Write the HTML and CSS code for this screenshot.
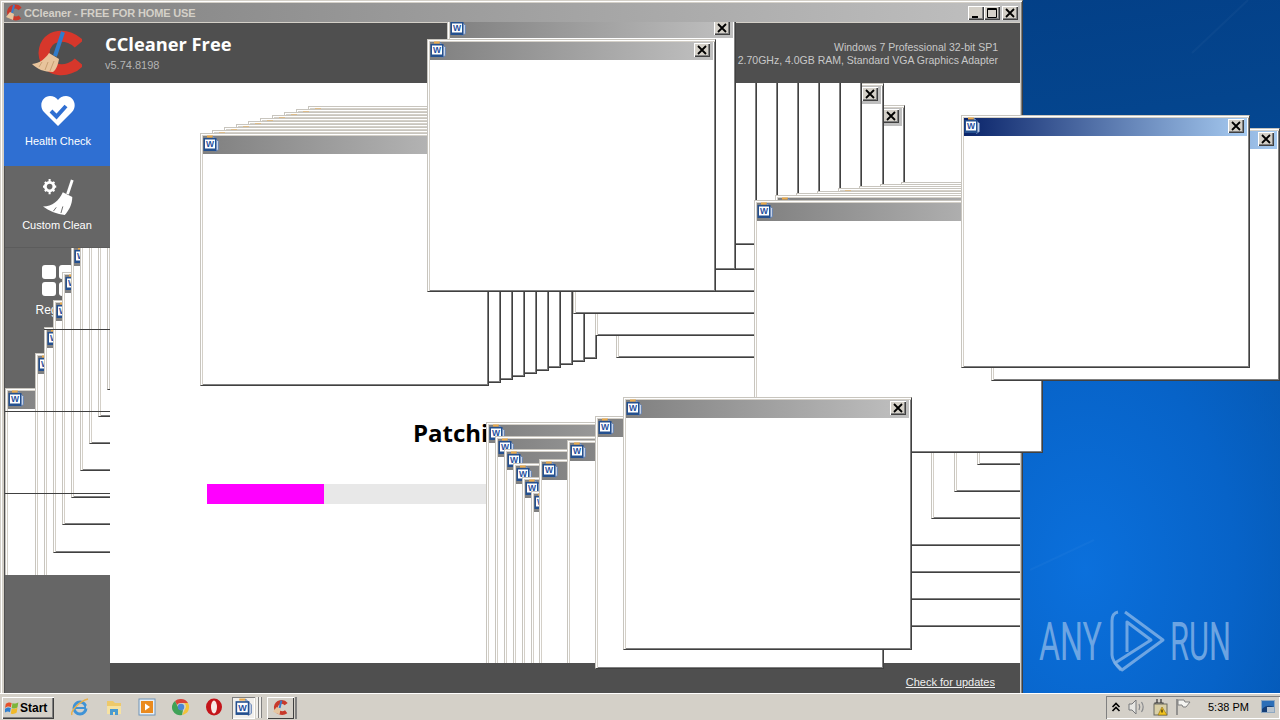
FILE: index.html
```html
<!DOCTYPE html>
<html lang="en">
<head>
<meta charset="utf-8">
<title>CCleaner - FREE FOR HOME USE</title>
<link rel="stylesheet" href="styles.css">
</head>
<body>
<svg class="defs" aria-hidden="true">
  <symbol id="word" viewBox="0 0 16 17">
    <path d="M4 1.500h6" stroke="#e9a94a" stroke-width="2" fill="none"/>
    <path d="M10 1l5.500 5.500v8l-3 2z" fill="#c9d3e6" stroke="#5d7db0" stroke-width=".8"/>
    <rect x=".5" y="3" width="13" height="13" fill="#24508f"/>
    <rect x="2" y="4.500" width="10" height="9" fill="#fff"/>
    <text class="word-w" x="7" y="12.200">W</text>
  </symbol>
  <symbol id="x" viewBox="0 0 16 14">
    <path d="M4 3l8 8M12 3l-8 8" stroke="#000" stroke-width="1.800" fill="none"/>
  </symbol>
</svg>

<div class="desktop">
  <svg class="streaks" viewBox="0 0 258 692" aria-hidden="true">
    <path d="M226 0L170 53M8 570L72 540" stroke="#fff" stroke-opacity=".03" stroke-width="2" fill="none"/>
  </svg>
  <svg class="watermark" viewBox="0 0 195 66">
    <text class="mark-text" x="0" y="52" textLength="63" lengthAdjust="spacingAndGlyphs">ANY</text>
    <path d="M86 4L124 32L83 62L76 55L112 32L88 14V44" fill="none" stroke="#7fb0e6" stroke-opacity=".85" stroke-width="3" stroke-linejoin="round"/>
    <path d="M79 4C74 5 73 9 73 13V47C73 52 76 56 82 62" fill="none" stroke="#7fb0e6" stroke-opacity=".85" stroke-width="3"/>
    <text class="mark-text" x="131" y="52" textLength="61" lengthAdjust="spacingAndGlyphs">RUN</text>
  </svg>

  <div class="ccleaner">
    <div class="titlebar">
      <svg class="app-ico" viewBox="0 0 18 18"><path d="M15 5C12 1 5 2 4 8c0 6 7 8 11 5" fill="none" stroke="#c8392b" stroke-width="4"/><path d="M9 1L7 9" stroke="#3a7cc8" stroke-width="2"/><path d="M5 8l4 2-1 6-7-3z" fill="#e6c6a0"/></svg>
      <span class="app-title">CCleaner - FREE FOR HOME USE</span>
      <span class="capbtns">
        <span class="capbtn"><svg viewBox="0 0 16 14"><path d="M4 11h6" stroke="#000" stroke-width="2"/></svg></span>
        <span class="capbtn"><svg viewBox="0 0 16 14"><path d="M3.500 2.500h9v9h-9zM3 3.500h10" fill="none" stroke="#000"/></svg></span>
        <span class="capbtn capbtn-close"><svg><use href="#x"/></svg></span>
      </span>
    </div>
    <header class="header">
      <svg class="logo" viewBox="0 0 52 48">
        <path d="M49 15C40 4 15 3 14 24C15 45 40 44 49 33" fill="none" stroke="#d7372b" stroke-width="11"/>
        <path d="M33 3L25 27" stroke="#2f7ccb" stroke-width="4"/>
        <path d="M19 24L29 30C28 36 26 41 23 43C14 43 7 40 2 35C10 34 15 30 19 24Z" fill="#e8c49c"/>
        <path d="M12 33L9 38M18 33L15 41M24 32L20 42" stroke="#c79e72" fill="none"/>
      </svg>
      <div class="brand">
        <div class="brand-name">CCleaner Free</div>
        <div class="brand-ver">v5.74.8198</div>
      </div>
      <div class="sysinfo">
        <div>Windows 7 Professional 32-bit SP1</div>
        <div>2.70GHz, 4.0GB RAM, Standard VGA Graphics Adapter</div>
      </div>
    </header>
    <div class="body">
      <nav class="sidebar">
        <div class="tile tile-health">
          <svg class="tile-ico ico-heart" viewBox="0 0 34 30"><path d="M17 30L3 16C-3 9 2 0 9 0c3.500 0 6 1.500 8 4c2-2.500 4.500-4 8-4c7 0 12 9 6 16z" fill="#fff"/><path d="M10 15l5.500 5.500L25 10" fill="none" stroke="#2f6fd2" stroke-width="4"/></svg>
          <span>Health Check</span>
        </div>
        <div class="tile tile-custom">
          <svg class="tile-ico ico-broom" viewBox="0 0 36 38">
            <circle cx="7" cy="8" r="4.500" fill="none" stroke="#fff" stroke-width="3"/>
            <path d="M7 0v3M7 13v3M0 8h3M11 8h3M2 3l2 2M10 11l2 2M12 3l-2 2M4 11l-2 2" stroke="#fff" stroke-width="2.200"/>
            <path d="M31 1L26 16" stroke="#fff" stroke-width="3"/>
            <path d="M21 14L31 19C31 27 27 34 23 38C15 37 7 34 0 29C10 29 17 23 21 14Z" fill="#fff"/>
            <path d="M14 30L11 34M21 29L19 36" stroke="#666" fill="none"/>
          </svg>
          <span>Custom Clean</span>
        </div>
        <div class="tile tile-registry">
          <div class="tile-ico squares"><i></i><i></i><i></i><i></i></div>
          <span>Registry</span>
        </div>
        <div class="tile tile-tools"></div>
        <div class="side-stack">
          <div class="side-plane">
            <div class="win ts1"><div class="wt"><svg class="wi"><use href="#word"/></svg><span class="wx"><svg><use href="#x"/></svg></span></div></div>
            <div class="win ts2"><div class="wt"><svg class="wi"><use href="#word"/></svg><span class="wx"><svg><use href="#x"/></svg></span></div></div>
            <div class="win ts3"><div class="wt"><svg class="wi"><use href="#word"/></svg><span class="wx"><svg><use href="#x"/></svg></span></div></div>
            <div class="win ts4"><div class="wt"><svg class="wi"><use href="#word"/></svg><span class="wx"><svg><use href="#x"/></svg></span></div></div>
            <div class="win ts5"><div class="wt"><svg class="wi"><use href="#word"/></svg><span class="wx"><svg><use href="#x"/></svg></span></div></div>
            <div class="win ts6"><div class="wt"><svg class="wi"><use href="#word"/></svg><span class="wx"><svg><use href="#x"/></svg></span></div></div>
            <div class="win ts7"><div class="wt"><svg class="wi"><use href="#word"/></svg><span class="wx"><svg><use href="#x"/></svg></span></div></div>
            <div class="win ts8"><div class="wt"><svg class="wi"><use href="#word"/></svg><span class="wx"><svg><use href="#x"/></svg></span></div></div>
            <div class="win ts9"><div class="wt"><svg class="wi"><use href="#word"/></svg><span class="wx"><svg><use href="#x"/></svg></span></div></div>
            <div class="win ts10"><div class="wt"><svg class="wi"><use href="#word"/></svg><span class="wx"><svg><use href="#x"/></svg></span></div></div>
          </div>
          <div class="sep sep1"></div>
          <div class="sep sep2"></div>
          <div class="sep sep3"></div>
        </div>
      </nav>
      <div class="right">
        <main class="main">
          <h1 class="status">Patching</h1>
          <div class="track"><div class="fill"></div></div>
          <div class="plane">
            <div class="win a1"><div class="wt"><svg class="wi"><use href="#word"/></svg><span class="wx"><svg><use href="#x"/></svg></span></div></div>
            <div class="win a2"><div class="wt"><svg class="wi"><use href="#word"/></svg><span class="wx"><svg><use href="#x"/></svg></span></div></div>
            <div class="win a3"><div class="wt"><svg class="wi"><use href="#word"/></svg><span class="wx"><svg><use href="#x"/></svg></span></div></div>
            <div class="win a4"><div class="wt"><svg class="wi"><use href="#word"/></svg><span class="wx"><svg><use href="#x"/></svg></span></div></div>
            <div class="win a5"><div class="wt"><svg class="wi"><use href="#word"/></svg><span class="wx"><svg><use href="#x"/></svg></span></div></div>
            <div class="win a6"><div class="wt"><svg class="wi"><use href="#word"/></svg><span class="wx"><svg><use href="#x"/></svg></span></div></div>
            <div class="win a7"><div class="wt"><svg class="wi"><use href="#word"/></svg><span class="wx"><svg><use href="#x"/></svg></span></div></div>
            <div class="win a8"><div class="wt"><svg class="wi"><use href="#word"/></svg><span class="wx"><svg><use href="#x"/></svg></span></div></div>
            <div class="win a9"><div class="wt"><svg class="wi"><use href="#word"/></svg><span class="wx"><svg><use href="#x"/></svg></span></div></div>
            <div class="win a10"><div class="wt"><svg class="wi"><use href="#word"/></svg><span class="wx"><svg><use href="#x"/></svg></span></div></div>

            <div class="win d1"><div class="wt"><svg class="wi"><use href="#word"/></svg><span class="wx"><svg><use href="#x"/></svg></span></div></div>
            <div class="win d2"><div class="wt"><svg class="wi"><use href="#word"/></svg><span class="wx"><svg><use href="#x"/></svg></span></div></div>
            <div class="win d3"><div class="wt"><svg class="wi"><use href="#word"/></svg><span class="wx"><svg><use href="#x"/></svg></span></div></div>
            <div class="win d4"><div class="wt"><svg class="wi"><use href="#word"/></svg><span class="wx"><svg><use href="#x"/></svg></span></div></div>
            <div class="win d5"><div class="wt"><svg class="wi"><use href="#word"/></svg><span class="wx"><svg><use href="#x"/></svg></span></div></div>
            <div class="win d6"><div class="wt"><svg class="wi"><use href="#word"/></svg><span class="wx"><svg><use href="#x"/></svg></span></div></div>
            <div class="win d7"><div class="wt"><svg class="wi"><use href="#word"/></svg><span class="wx"><svg><use href="#x"/></svg></span></div></div>
            <div class="win d8"><div class="wt"><svg class="wi"><use href="#word"/></svg><span class="wx"><svg><use href="#x"/></svg></span></div></div>

            <div class="win b1"><div class="wt"><svg class="wi"><use href="#word"/></svg><span class="wx"><svg><use href="#x"/></svg></span></div></div>
            <div class="win b2"><div class="wt"><svg class="wi"><use href="#word"/></svg><span class="wx"><svg><use href="#x"/></svg></span></div></div>
            <div class="win b3"><div class="wt"><svg class="wi"><use href="#word"/></svg><span class="wx"><svg><use href="#x"/></svg></span></div></div>
            <div class="win b4"><div class="wt"><svg class="wi"><use href="#word"/></svg><span class="wx"><svg><use href="#x"/></svg></span></div></div>
            <div class="win b5"><div class="wt"><svg class="wi"><use href="#word"/></svg><span class="wx"><svg><use href="#x"/></svg></span></div></div>
            <div class="win b6"><div class="wt"><svg class="wi"><use href="#word"/></svg><span class="wx"><svg><use href="#x"/></svg></span></div></div>
            <div class="win b7"><div class="wt"><svg class="wi"><use href="#word"/></svg><span class="wx"><svg><use href="#x"/></svg></span></div></div>

            <div class="win c1"><div class="wt"><svg class="wi"><use href="#word"/></svg><span class="wx"><svg><use href="#x"/></svg></span></div></div>
            <div class="win c2"><div class="wt"><svg class="wi"><use href="#word"/></svg><span class="wx"><svg><use href="#x"/></svg></span></div></div>
            <div class="win c3"><div class="wt"><svg class="wi"><use href="#word"/></svg><span class="wx"><svg><use href="#x"/></svg></span></div></div>
            <div class="win c4"><div class="wt"><svg class="wi"><use href="#word"/></svg><span class="wx"><svg><use href="#x"/></svg></span></div></div>
            <div class="win c5"><div class="wt"><svg class="wi"><use href="#word"/></svg><span class="wx"><svg><use href="#x"/></svg></span></div></div>
            <div class="win c6"><div class="wt"><svg class="wi"><use href="#word"/></svg><span class="wx"><svg><use href="#x"/></svg></span></div></div>
            <div class="win c7"><div class="wt"><svg class="wi"><use href="#word"/></svg><span class="wx"><svg><use href="#x"/></svg></span></div></div>

            <div class="win e1"><div class="wt"><svg class="wi"><use href="#word"/></svg><span class="wx"><svg><use href="#x"/></svg></span></div></div>
            <div class="win e2"><div class="wt"><svg class="wi"><use href="#word"/></svg><span class="wx"><svg><use href="#x"/></svg></span></div></div>
            <div class="win e3"><div class="wt"><svg class="wi"><use href="#word"/></svg><span class="wx"><svg><use href="#x"/></svg></span></div></div>
            <div class="win e4"><div class="wt"><svg class="wi"><use href="#word"/></svg><span class="wx"><svg><use href="#x"/></svg></span></div></div>
            <div class="win e5"><div class="wt"><svg class="wi"><use href="#word"/></svg><span class="wx"><svg><use href="#x"/></svg></span></div></div>
            <div class="win e6"><div class="wt"><svg class="wi"><use href="#word"/></svg><span class="wx"><svg><use href="#x"/></svg></span></div></div>
            <div class="win f1"><div class="wt"><svg class="wi"><use href="#word"/></svg><span class="wx"><svg><use href="#x"/></svg></span></div></div>
            <div class="win f2"><div class="wt"><svg class="wi"><use href="#word"/></svg><span class="wx"><svg><use href="#x"/></svg></span></div></div>
          </div>
        </main>
        <footer class="footer"><a class="update-link">Check for updates</a></footer>
      </div>
    </div>
  </div>

  <div class="win tw0"><div class="wt"><svg class="wi"><use href="#word"/></svg><span class="wx"><svg><use href="#x"/></svg></span></div></div>
  <div class="win top tw1"><div class="wt"><svg class="wi"><use href="#word"/></svg><span class="wx"><svg><use href="#x"/></svg></span></div></div>
  <div class="win top tw2"><div class="wt"><svg class="wi"><use href="#word"/></svg><span class="wx"><svg><use href="#x"/></svg></span></div></div>
  <div class="win top tw3"><div class="wt"><svg class="wi"><use href="#word"/></svg><span class="wx"><svg><use href="#x"/></svg></span></div></div>
  <div class="win top tw4"><div class="wt"><svg class="wi"><use href="#word"/></svg><span class="wx"><svg><use href="#x"/></svg></span></div></div>
  <div class="win top tw5"><div class="wt wt-active"><svg class="wi"><use href="#word"/></svg><span class="wx"><svg><use href="#x"/></svg></span></div></div>
  <div class="win top tw6"><div class="wt wt-active"><svg class="wi"><use href="#word"/></svg><span class="wx"><svg><use href="#x"/></svg></span></div></div>

  <div class="taskbar">
    <button class="start">
      <svg class="flag" viewBox="0 0 18 16"><path d="M1 3c3-2 5-2 7-1L7 7C5 6 3 6 0 8z" fill="#e5502a"/><path d="M9 2c2 1 4 1 7-1l-1 6c-3 2-5 2-7 1z" fill="#7cb53a"/><path d="M0 9c3-2 5-2 7-1l-1 5c-2-1-4-1-7 1z" fill="#2f7fd0"/><path d="M8 8.500c2 1 4 1 7-1l-1 6c-3 2-5 2-7 1z" fill="#f1b92a"/></svg>
      <span>Start</span>
    </button>
    <div class="quick">
      <svg class="ql" viewBox="0 0 18 18"><circle cx="9" cy="10" r="6" fill="none" stroke="#3f93d6" stroke-width="3"/><path d="M4 10h10" stroke="#3f93d6" stroke-width="2"/><path d="M15 9h3" stroke="#d4d0c8" stroke-width="3"/><path d="M1 17C-1 13 9 3 17 1" fill="none" stroke="#e9b04a" stroke-width="1.500"/></svg>
      <svg class="ql" viewBox="0 0 18 18"><path d="M2 3h6l2 2h6v11H2z" fill="#eec96a"/><path d="M2 8h14v8H2z" fill="#f6e2a2"/><path d="M5 17V11h8v6h-3v-3H8v3z" fill="#4a9bd0"/></svg>
      <svg class="ql" viewBox="0 0 18 18"><rect x="1" y="1" width="16" height="16" fill="#e9f0f6" stroke="#6e93b8"/><rect x="3" y="3" width="12" height="12" fill="#ea8a1e"/><path d="M7 5.500l5 3.500-5 3.500z" fill="#fff"/></svg>
      <svg class="ql" viewBox="0 0 18 18"><path d="M9 1a8 8 0 0 1 7 4H9a4 4 0 0 0-4 2L3 3a8 8 0 0 1 6-2z" fill="#d9443a"/><path d="M16 5a8 8 0 0 1-6 12l3-6a4 4 0 0 0-1-6z" fill="#f3c33a"/><path d="M10 17a8 8 0 0 1-7-14l3 6a4 4 0 0 0 5 3z" fill="#3fa257"/><circle cx="9" cy="9" r="3.200" fill="#4a86d8"/></svg>
      <svg class="ql" viewBox="0 0 18 18"><ellipse cx="9" cy="9" rx="8" ry="8.500" fill="#c4141a"/><ellipse cx="9" cy="9" rx="3" ry="6.500" fill="#f7e9e6"/></svg>
    </div>
    <div class="task task-word"><svg class="task-ico"><use href="#word"/></svg></div>
    <div class="task-edges"><i></i><i></i></div>
    <div class="task task-cc">
      <svg class="task-ico" viewBox="0 0 18 18"><path d="M15 5C12 1 5 2 4 8c0 6 7 8 11 5" fill="none" stroke="#c8392b" stroke-width="4"/><path d="M10 1L8 9" stroke="#3a7cc8" stroke-width="2"/><path d="M5 8l4 2-1 6-7-3z" fill="#e6c6a0"/></svg>
    </div>
    <div class="task-edge"></div>
    <div class="tray">
      <svg class="tray-ico chev" viewBox="0 0 10 12"><path d="M1.500 6L5 2.500 8.500 6M1.500 10L5 6.500 8.500 10" fill="none" stroke="#000" stroke-width="1.600"/></svg>
      <svg class="tray-ico spk" viewBox="0 0 18 16"><path d="M1 5h3l4-4v14l-4-4H1z" fill="#e6e6e2" stroke="#77787a"/><path d="M11 5c1 2 1 4 0 6M13.500 3c2 3 2 7 0 10" fill="none" stroke="#888a8c" stroke-width="1.200"/></svg>
      <svg class="tray-ico pwr" viewBox="0 0 18 18"><path d="M6 1v4M10 1v4M4 5h8v4H4zM8 9v3" fill="none" stroke="#333" stroke-width="1.200"/><rect x="3" y="6" width="13" height="11" fill="#d9cfa6" stroke="#6a6a60"/><path d="M11 9l5 8H7z" fill="#f1c21e" stroke="#8a6d10" stroke-width=".6"/><path d="M11 11.500v3" stroke="#000"/></svg>
      <svg class="tray-ico flg" viewBox="0 0 16 18"><path d="M2 1v16" stroke="#777" stroke-width="1.400"/><path d="M3 2h6l1 2h5l-4 5H8L7 7H3z" fill="#f4f4f1" stroke="#808080"/></svg>
      <span class="clock">5:38 PM</span>
      <svg class="tray-ico mon" viewBox="0 0 14 14"><rect x=".5" y=".5" width="13" height="12" fill="#2c6fb8" stroke="#8fa8c0"/><path d="M1 9c4-4 8-4 12-2v5H1z" fill="#153f78"/><path d="M6 7h7v5H6z" fill="#b8c4cf"/></svg>
    </div>
  </div>
</div>
</body>
</html>
```
FILE: styles.css
```css
* { box-sizing: border-box; }
html, body { margin: 0; padding: 0; width: 1280px; height: 720px; overflow: hidden; }
body { font-family: "Liberation Sans", Arial, sans-serif; font-size: 12px; color: #000; }
.defs { display: none; }
.word-w { font: 700 8.500px "Liberation Sans", Arial, sans-serif; fill: #1f4f9e; text-anchor: middle; }

.desktop {
  position: relative; width: 1280px; height: 720px; overflow: hidden;
  background:
    radial-gradient(ellipse 300px 430px at 1085px 570px, #0b70dc 0%, #0763c8 50%, rgba(6,88,180,0) 100%),
    linear-gradient(172deg, #023a80 0%, #04458e 30%, #0554a9 62%, #0050a8 100%);
}
.streaks { position: absolute; left: 1022px; top: 0; width: 258px; height: 692px; }
.watermark { position: absolute; left: 1039px; top: 608px; width: 195px; height: 66px; overflow: visible; }
.mark-text { font: 400 53px Roboto, "Liberation Sans", sans-serif; fill: #7fb0e6; fill-opacity: .85; }

/* CCleaner window */
.ccleaner {
  position: absolute; left: 0; top: 0; width: 1023px; height: 697px;
  display: flex; flex-direction: column;
  padding: 3px 2px 3px 3px;
  background: #d4d0c8;
  border: 1px solid; border-color: #d4d0c8 #404040 #404040 #d4d0c8;
  box-shadow: inset 1px 1px 0 #fff, inset -1px -1px 0 #808080;
}
.titlebar {
  position: relative; z-index: 2; height: 19px; margin-top: -1px; flex: none;
  display: flex; align-items: center; padding: 0 2px 0 1px;
  background: linear-gradient(90deg, #808080, #c0c0c0);
}
.app-ico { width: 18px; height: 18px; flex: none; }
.app-title { margin-left: 1px; font-weight: 700; font-size: 11px; letter-spacing: -.14px; color: #d4d0c8; }
.capbtns { margin-left: auto; display: flex; }
.capbtn, .wx {
  width: 16px; height: 14px; background: #d4d0c8; display: block; flex: none;
  box-shadow: inset 1px 1px 0 #fff, inset -1px -1px 0 #404040, inset -2px -2px 0 #808080;
}
.capbtn svg, .wx svg { display: block; width: 16px; height: 14px; }
.capbtn-close { margin-left: 2px; }

.header {
  height: 60px; flex: none; margin-top: 1px; background: #4f4f4f; color: #fff;
  display: flex; align-items: flex-start;
}
.logo { width: 52px; height: 48px; margin: 6px 0 0 26px; flex: none; }
.brand { margin: 9px 0 0 23px; }
.brand-name { font: 700 18.300px/24px "Open Sans", sans-serif; color: #fff; }
.brand-ver { font-size: 11px; line-height: 14px; margin-top: 2px; color: #b4b4b4; }
.sysinfo { margin: 18px 22px 0 auto; text-align: right; font-size: 10.500px; line-height: 13px; color: #c8c8c8; }

.body { flex: 1; display: flex; min-height: 0; }
.sidebar {
  position: relative; width: 106px; flex: none; background: #666; color: #fff;
  border-left: 1px solid #505050;
}
.tile { display: flex; flex-direction: column; align-items: center; height: 82px; font-size: 11px; line-height: 14px; }
.tile-ico { display: block; flex: none; }
.tile-health { height: 83px; background: #2f6fd2; padding-top: 13px; margin-left: -1px; }
.ico-heart { width: 34px; height: 30px; margin-left: 2px; }
.tile-health span { margin-top: 8px; margin-left: 2px; }
.tile-custom { padding-top: 12px; border-bottom: 1px solid #5c5c5c; }
.tile-custom .tile-ico { width: 34px; height: 38px; margin-left: 5px; }
.tile-custom span { margin-top: 2px; margin-right: 1px; }
.tile-registry { padding-top: 17px; }
.squares { width: 31px; height: 31px; display: grid; grid-template-columns: 14px 14px; grid-auto-rows: 14px; gap: 3px; }
.squares i { background: #fff; border-radius: 3px; }
.tile-registry span { margin-top: 7px; font-size: 12px; }

.side-stack { position: absolute; left: 0; top: 165px; width: 105px; height: 327px; overflow: hidden; }
.side-plane { position: absolute; left: -5px; top: -248px; width: 1280px; height: 720px; }
.sep { position: absolute; left: 0; right: 0; height: 1px; background: #404040; }
.sep1 { top: 81px; left: 39px; }
.sep2 { top: 163px; }
.sep3 { top: 245px; }

.right { flex: 1; min-width: 0; display: flex; flex-direction: column; }
.main {
  position: relative; flex: 1; min-height: 0; overflow: hidden; background: #fff;
  display: flex; flex-direction: column; align-items: center; padding-top: 334px;
}
.status { width: 716px; margin: 0; padding-left: 206px; font: 700 24px/32px "Open Sans", sans-serif; color: #000; }
.track { width: 716px; height: 20px; margin-top: 35px; background: #e8e8e8; flex: none; }
.fill { width: 117px; height: 20px; background: #ff00ff; }
.plane { position: absolute; left: -110px; top: -83px; width: 1280px; height: 720px; }
.footer {
  height: 30px; flex: none; background: #4f4f4f; display: flex;
  justify-content: flex-end; align-items: flex-end; padding: 0 25px 4px 0;
}
.update-link { color: #f0f0f0; text-decoration: underline; font-size: 11px; line-height: 14px; }

/* Word dialog windows */
.win {
  position: absolute; width: 289px; height: 253px; padding: 2px; background: #fff;
  border: 1px solid; border-color: #c8c5be #404040 #404040 #c8c5be;
  box-shadow: inset 1px 1px 0 #fff, inset 2px 2px 0 #d4d0c8, inset -1px -1px 0 #808080;
}
.wt {
  height: 18px; display: flex; align-items: center; justify-content: space-between;
  padding: 0 3px 0 0;
  background: linear-gradient(90deg, #808080, #c0c0c0);
}
.wt-active { background: linear-gradient(90deg, #0a246a, #a6caf0); }
.wi { width: 16px; height: 17px; flex: none; display: block; margin-top: -3px; }
.wx { margin-top: -2px; }
.tw0 { z-index: 1; left: 447px; top: 17px; }
.top { z-index: 3; }
.tw1 { left: 754px; top: 200px; }
.tw2 { left: 595px; top: 416px; }
.tw3 { left: 623px; top: 397px; }
.tw4 { left: 427px; top: 39px; }
.tw5 { left: 991px; top: 128px; }
.tw6 { left: 961px; top: 115px; }

.a1 { left: 308px; top: 106px; }
.a2 { left: 296px; top: 109px; }
.a3 { left: 284px; top: 112px; }
.a4 { left: 272px; top: 115px; }
.a5 { left: 260px; top: 118px; }
.a6 { left: 248px; top: 121px; }
.a7 { left: 236px; top: 124px; }
.a8 { left: 224px; top: 127px; }
.a9 { left: 212px; top: 130px; }
.a10 { left: 200px; top: 133px; }

.d1 { left: 616px; top: 105px; }
.d2 { left: 595px; top: 83px; }
.d3 { left: 573px; top: 61px; }
.d4 { left: 552px; top: 39px; }
.d5 { left: 531px; top: 17px; }
.d6 { left: 510px; top: -10px; }
.d7 { left: 489px; top: -10px; }
.d8 { left: 468px; top: -8px; }

.b1 { left: 901px; top: 182px; }
.b2 { left: 880px; top: 184px; }
.b3 { left: 859px; top: 186px; }
.b4 { left: 838px; top: 188px; }
.b5 { left: 817px; top: 191px; }
.b6 { left: 796px; top: 193px; }
.b7 { left: 775px; top: 195px; }

.c1 { left: 839px; top: 374px; }
.c2 { left: 862px; top: 347px; }
.c3 { left: 885px; top: 320px; }
.c4 { left: 908px; top: 293px; }
.c5 { left: 931px; top: 266px; }
.c6 { left: 954px; top: 239px; }
.c7 { left: 977px; top: 212px; }

.e1 { left: 486px; top: 422px; }
.e2 { left: 495px; top: 436px; }
.e3 { left: 504px; top: 449px; }
.e4 { left: 513px; top: 463px; }
.e5 { left: 522px; top: 477px; }
.e6 { left: 531px; top: 491px; }
.f1 { left: 539px; top: 459px; }
.f2 { left: 567px; top: 440px; }

.ts1 { left: 5px; top: 388px; }
.ts2 { left: 35px; top: 353px; }
.ts3 { left: 44px; top: 327px; }
.ts4 { left: 53px; top: 300px; }
.ts5 { left: 62px; top: 272px; }
.ts6 { left: 71px; top: 245px; }
.ts7 { left: 80px; top: 218px; }
.ts8 { left: 89px; top: 191px; }
.ts9 { left: 98px; top: 164px; }
.ts10 { left: 107px; top: 137px; }

/* Taskbar */
.taskbar {
  position: absolute; z-index: 5; left: 0; top: 693px; width: 1280px; height: 27px;
  background: #d4d0c8; border-top: 1px solid #fff;
  display: flex; align-items: center;
}
.start {
  width: 52px; height: 22px; margin: 1px 0 0 2px; padding: 0 0 0 3px; border: 0; flex: none;
  display: flex; align-items: center; gap: 0; background: #d4d0c8;
  box-shadow: inset 1px 1px 0 #fff, inset -1px -1px 0 #404040, inset -2px -2px 0 #808080;
  font: 700 12px "Liberation Sans", Arial, sans-serif; color: #000;
}
.flag { width: 15px; height: 14px; flex: none; }
.quick { display: flex; gap: 15.500px; margin-left: 17px; }
.ql { width: 18px; height: 18px; display: block; flex: none; }
.task {
  height: 22px; margin-top: 1px; display: flex; align-items: center; justify-content: center; flex: none;
  box-shadow: inset 1px 1px 0 #808080, inset -1px -1px 0 #fff;
}
.task-word { width: 23px; margin-left: 9px; background: #f1efeb; }
.task-word .task-ico { margin-top: -2px; }
.task-edges { display: flex; gap: 1px; margin-top: 1px; margin-left: 1px; flex: none; }
.task-edges i { width: 2px; height: 21px; background: #f1efeb; box-shadow: 1px 0 0 #808080; }
.task-cc { width: 27px; margin-left: 6px; background: #d4d0c8; box-shadow: inset 1px 1px 0 #fff, inset -1px -1px 0 #404040; }
.task-edge { width: 2px; height: 22px; margin: 1px 0 0 1px; background: #808080; flex: none; }
.task-ico { width: 17px; height: 18px; display: block; }
.tray {
  margin-left: auto; width: 174px; height: 23px; flex: none;
  display: flex; align-items: center; padding-left: 5px;
  box-shadow: inset 1px 1px 0 #808080, inset -1px -1px 0 #fff;
}
.tray-ico { display: block; flex: none; }
.chev { width: 10px; height: 12px; margin-right: 7px; }
.spk { width: 18px; height: 16px; margin-right: 5px; }
.pwr { width: 18px; height: 18px; margin-right: 6px; }
.flg { width: 16px; height: 18px; margin-right: 9px; }
.clock { font-size: 11px; width: 53px; flex: none; margin-left: 8px; white-space: nowrap; }
.mon { width: 14px; height: 14px; }
```
